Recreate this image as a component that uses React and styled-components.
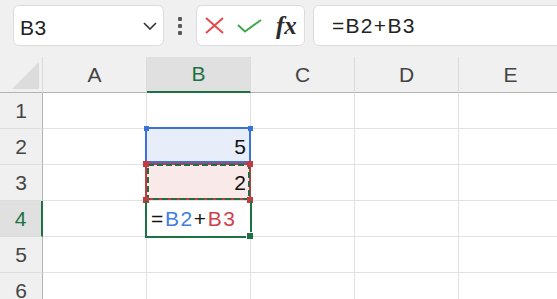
import React from "react";
import styled, { createGlobalStyle } from "styled-components";

const GlobalStyle = createGlobalStyle`
  body {
    margin: 0;
    background: #f0f0f0;
    font-family: "Liberation Sans", Arial, sans-serif;
  }
  * { box-sizing: border-box; }
`;

const Page = styled.div`
  width: 557px;
  height: 299px;
  overflow: hidden;
  background: #f0f0f0;
`;

const TopBar = styled.div`
  height: 57px;
  display: flex;
  align-items: flex-start;
  padding: 5px 0 0 13px;
`;

const Box = styled.div`
  height: 41px;
  background: #fff;
  border: 1px solid #dcdcdc;
  border-radius: 6px;
  display: flex;
  align-items: center;
`;

const NameBox = styled(Box)`
  width: 151px;
  justify-content: space-between;
  padding: 5px 6px 0 6px;
  font-size: 21px;
  letter-spacing: 0.5px;
  color: #222;
`;

const Chevron = styled.svg`
  margin-top: -5px;
`;

const Dots = styled.div`
  width: 32px;
  height: 41px;
  display: flex;
  flex-direction: column;
  align-items: center;
  justify-content: center;
  gap: 3px;
`;

const Dot = styled.span`
  width: 4px;
  height: 4px;
  border-radius: 1px;
  background: #5a5a5a;
`;

const ButtonGroup = styled(Box)`
  width: 109px;
  padding-left: 8px;
  gap: 13px;
`;

const Fx = styled.span`
  font-family: "Liberation Serif", "Times New Roman", serif;
  font-style: italic;
  font-weight: bold;
  font-size: 25px;
  color: #2b2b2b;
  margin-left: 1px;
`;

const FormulaInput = styled(Box)`
  margin-left: 8px;
  flex: 1;
  margin-right: -20px;
  padding-left: 18px;
  font-size: 21px;
  letter-spacing: 1.3px;
  color: #222;
`;

const Sheet = styled.div`
  position: relative;
  display: grid;
  grid-template-columns: 43px repeat(5, 104px);
  grid-auto-rows: 36px;
`;

const Corner = styled.div`
  background: #f0f0f0;
  border-right: 1px solid #dcdcdc;
  border-bottom: 1px solid #b4b4b4;
  display: flex;
  align-items: flex-end;
  justify-content: flex-end;
  padding: 0 3px 3px 0;
`;

const Triangle = styled.div`
  width: 27px;
  height: 27px;
  background: #dcdcdc;
  clip-path: polygon(100% 0, 100% 100%, 0 100%);
`;

const ColHeader = styled.div`
  background: ${({ $active }) => ($active ? "#e0e0e0" : "#f0f0f0")};
  color: ${({ $active }) => ($active ? "#1e7145" : "#444")};
  border-right: 1px solid #dcdcdc;
  border-bottom: ${({ $active }) => ($active ? "2px solid #1e7145" : "1px solid #b4b4b4")};
  display: flex;
  align-items: center;
  justify-content: center;
  font-size: 21px;
`;

const RowHeader = styled.div`
  background: ${({ $active }) => ($active ? "#e0e0e0" : "#f0f0f0")};
  color: ${({ $active }) => ($active ? "#1e7145" : "#444")};
  border-right: ${({ $active }) => ($active ? "2px solid #1e7145" : "1px solid #b4b4b4")};
  border-bottom: 1px solid #dcdcdc;
  display: flex;
  align-items: center;
  justify-content: center;
  font-size: 21px;
`;

const Cell = styled.div`
  background: ${({ $fill }) => $fill || "#fff"};
  border-right: 1px solid #e1e1e1;
  border-bottom: 1px solid #e1e1e1;
  display: flex;
  align-items: center;
  justify-content: ${({ $num }) => ($num ? "flex-end" : "flex-start")};
  padding: 0 4px;
  font-size: 21px;
  letter-spacing: ${({ $num }) => ($num ? "0" : "1.6px")};
  color: #111;
`;

const Ref = styled.span`
  color: ${({ $c }) => $c};
`;

const RangeBox = styled.div`
  position: absolute;
  left: ${({ $x }) => $x}px;
  top: ${({ $y }) => $y}px;
  width: ${({ $w }) => $w}px;
  height: ${({ $h }) => $h}px;
  border: 2px solid ${({ $c }) => $c};
  pointer-events: none;
`;

const ActiveBox = styled(RangeBox)`
  border-top: none;
`;

const Handle = styled.div`
  position: absolute;
  width: ${({ $s }) => $s}px;
  height: ${({ $s }) => $s}px;
  left: ${({ $x }) => $x}px;
  top: ${({ $y }) => $y}px;
  background: ${({ $c }) => $c};
`;

const FillHandle = styled.div`
  position: absolute;
  right: -3px;
  bottom: -3px;
  width: 6px;
  height: 6px;
  background: #1e7145;
  box-shadow: -1px -1px 0 #fff;
`;

const Marquee = styled.svg`
  position: absolute;
  left: 147px;
  top: 107px;
  overflow: visible;
`;

const cols = ["A", "B", "C", "D", "E"];

const cellContent = {
  B2: { num: true, fill: "#e8eef9", value: "5" },
  B3: { num: true, fill: "#f9e9e8", value: "2" },
  B4: {
    value: (
      <>
        =<Ref $c="#3f7fe0">B2</Ref>+<Ref $c="#d0404c">B3</Ref>
      </>
    ),
  },
};

const BLUE = "#3a72d8";
const RED = "#c43a3f";

export default function App() {
  return (
    <Page>
      <GlobalStyle />
      <TopBar>
        <NameBox>
          <span>B3</span>
          <Chevron width="14" height="8" viewBox="0 0 14 8">
            <polyline points="1,1 7,7 13,1" fill="none" stroke="#333" strokeWidth="1.6" />
          </Chevron>
        </NameBox>
        <Dots>
          <Dot />
          <Dot />
          <Dot />
        </Dots>
        <ButtonGroup>
          <svg width="19" height="17" viewBox="0 0 19 17">
            <path d="M1 1 L18 16 M18 1 L1 16" stroke="#e5484d" strokeWidth="2" fill="none" />
          </svg>
          <svg width="25" height="14" viewBox="0 0 25 14">
            <polyline points="1,6 8,12.5 24,1" stroke="#3ea84f" strokeWidth="2" fill="none" />
          </svg>
          <Fx>fx</Fx>
        </ButtonGroup>
        <FormulaInput>=B2+B3</FormulaInput>
      </TopBar>
      <Sheet>
        <Corner>
          <Triangle />
        </Corner>
        {cols.map((c) => (
          <ColHeader key={c} $active={c === "B"}>
            {c}
          </ColHeader>
        ))}
        {[1, 2, 3, 4, 5, 6].map((r) => (
          <React.Fragment key={r}>
            <RowHeader $active={r === 4}>{r}</RowHeader>
            {cols.map((c) => {
              const d = cellContent[c + r] || {};
              return (
                <Cell key={c} $num={d.num} $fill={d.fill}>
                  {d.value}
                </Cell>
              );
            })}
          </React.Fragment>
        ))}

        <RangeBox $x={145} $y={70} $w={106} $h={36} $c={BLUE} />
        <Handle $s={5} $c={BLUE} $x={144} $y={69} />
        <Handle $s={5} $c={BLUE} $x={248} $y={69} />

        <RangeBox $x={145} $y={106} $w={106} $h={37} $c={RED} />
        <Marquee width="103" height="36">
          <rect x="1" y="1" width="101" height="34" fill="none" stroke="#1e6e42" strokeWidth="2" strokeDasharray="6 3" />
        </Marquee>
        <Handle $s={6} $c={RED} $x={143} $y={104} />
        <Handle $s={6} $c={RED} $x={247} $y={104} />
        <Handle $s={6} $c={RED} $x={143} $y={140} />
        <Handle $s={6} $c={RED} $x={247} $y={140} />

        <ActiveBox $x={145} $y={144} $w={107} $h={37} $c="#1e7145">
          <FillHandle />
        </ActiveBox>
      </Sheet>
    </Page>
  );
}
